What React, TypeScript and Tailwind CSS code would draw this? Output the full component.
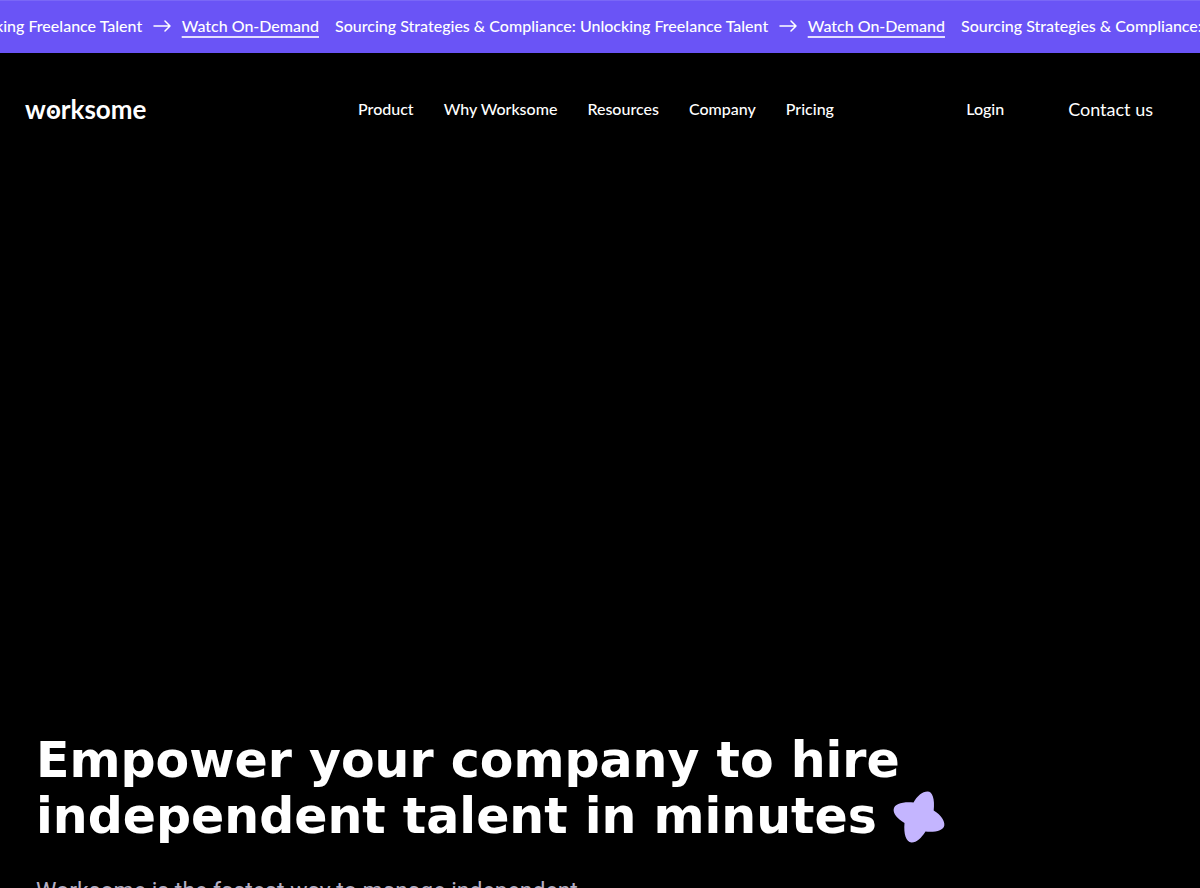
const navLinks = ["Product", "Why Worksome", "Resources", "Company", "Pricing"];

function Arrow() {
  return (
    <svg aria-hidden="true" width="18" height="12" viewBox="0 0 18 12" fill="none" stroke="currentColor" strokeWidth="1.5" strokeLinecap="round" strokeLinejoin="round" className="shrink-0">
      <path d="M1 6h16M12 1l5 5-5 5" />
    </svg>
  );
}

function Announcement() {
  return (
    <li className="flex w-[626px] shrink-0 items-center justify-between pr-4">
      <span>Sourcing Strategies &amp; Compliance: Unlocking Freelance Talent</span>
      <Arrow />
      <a href="#webinar" className="underline decoration-[#e4deff] decoration-2 underline-offset-4">
        Watch On-Demand
      </a>
    </li>
  );
}

function Logo() {
  return (
    <a href="#home" aria-label="worksome" className="flex items-baseline text-[26px] leading-8 font-bold">
      <span>w</span>
      <span className="relative">
        o
        <span className="absolute top-[17px] left-1/2 size-1 -translate-x-1/2 rounded-full bg-white" />
      </span>
      <span>rksome</span>
    </a>
  );
}

function Star() {
  return (
    <svg aria-hidden="true" width="52" height="52" viewBox="0 0 52 52" className="shrink-0">
      <path
        d="M20.500 11.500C24 5 29.500 .5 34.500 .5C39.500 .5 42 8 40.700 19.500C48 24 52 30 51.300 34.500C50.500 39.500 42.500 41.500 32.500 40.600C28 47.500 23.500 51.700 18.500 51.500C13 51.200 10.500 43 11.500 32C4 27.500 0 22.500 .7 18C1.500 13 9.500 10.500 20.500 11.500Z"
        fill="#c4b5ff"
      />
    </svg>
  );
}

export default function App() {
  return (
    <div className="h-screen overflow-hidden bg-black font-['Lato',sans-serif] text-white">
      <aside aria-label="Announcements" className="overflow-hidden border-t border-[#7a67f7] bg-[#6a54f6] pt-[15px] pb-[17px]">
        <ul className="-ml-[291px] flex text-base leading-5 font-medium whitespace-nowrap">
          <Announcement />
          <Announcement />
          <Announcement />
        </ul>
      </aside>
      <header className="grid grid-cols-[1fr_auto_1fr] items-center px-[25px] pt-10">
        <Logo />
        <nav aria-label="Main" className="flex gap-[30px] pr-2 text-base leading-8 font-medium">
          {navLinks.map((label) => (
            <a key={label} href="#menu">{label}</a>
          ))}
        </nav>
        <div className="flex items-center justify-end gap-16 pr-[22px] leading-8">
          <a href="#login" className="text-base font-medium">Login</a>
          <a href="#contact" className="text-[18px]">Contact us</a>
        </div>
      </header>
      <main className="px-9 pt-[608px]">
        <h1 className="font-['DejaVu_Sans',sans-serif] text-[49px] leading-[56px] font-bold whitespace-nowrap">
          Empower your company to hire
          <span className="flex items-center gap-4">
            independent talent in minutes
            <Star />
          </span>
        </h1>
        <p className="mt-[31px] font-['Roboto',sans-serif] text-[23px] leading-8 text-[#b5afc4]">
          Worksome is the fastest way to manage independent
        </p>
      </main>
    </div>
  );
}
